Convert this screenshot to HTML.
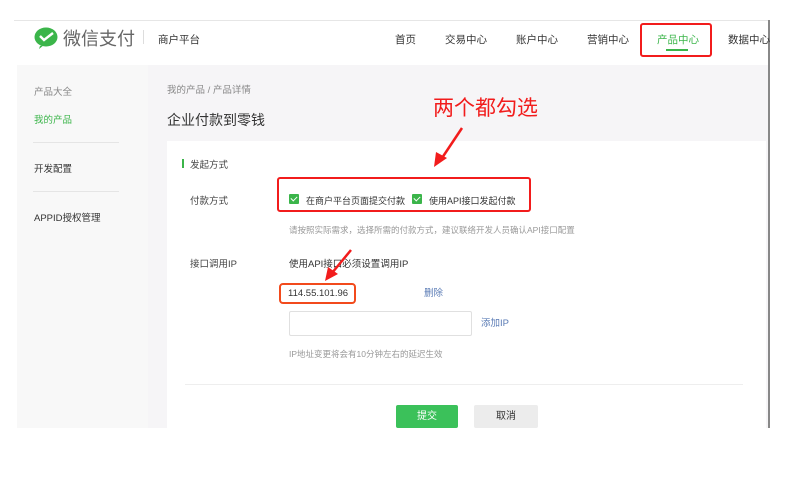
<!DOCTYPE html><html><head><meta charset="utf-8"><style>
*{margin:0;padding:0;box-sizing:border-box}
body{width:793px;height:486px;background:#fff;position:relative;overflow:hidden;font-family:"Liberation Sans","Noto Sans CJK SC",sans-serif;color:#353535}
.a{position:absolute;white-space:nowrap;line-height:1}
.t{margin-top:3px}
.cb{position:absolute;width:10px;height:10px;background:#3bb54a;border-radius:1px}
.cb:after{content:"";position:absolute;left:2px;top:2px;width:5px;height:3px;border-left:1.3px solid #fff;border-bottom:1.3px solid #fff;transform:rotate(-45deg)}
</style></head><body>
<div class="a" style="left:14px;top:20px;width:756px;height:1px;background:#e6e6e6"></div>
<div class="a" style="left:768px;top:20px;width:2px;height:408px;background:#888"></div>
<svg class="a" style="left:34px;top:27px" width="24" height="22" viewBox="0 0 24 22"><ellipse cx="12" cy="10" rx="11.5" ry="9.5" fill="#3bb54a"/><path d="M6 19 L5 22 L10 18Z" fill="#3bb54a"/><path d="M6 9 L10 13 L19 6" stroke="#fff" stroke-width="2.4" fill="none"/></svg>
<div class="a t" style="left:63px;top:27px;font-size:18px;color:#666">微信支付</div>
<div class="a" style="left:143px;top:30px;width:1px;height:14px;background:#ddd"></div>
<div class="a t" style="left:158px;top:32px;font-size:10.5px;color:#333">商户平台</div>
<div class="a t" style="left:395px;top:32px;font-size:10.5px;color:#333">首页</div>
<div class="a t" style="left:445px;top:32px;font-size:10.5px;color:#333">交易中心</div>
<div class="a t" style="left:516px;top:32px;font-size:10.5px;color:#333">账户中心</div>
<div class="a t" style="left:587px;top:32px;font-size:10.5px;color:#333">营销中心</div>
<div class="a t" style="left:657px;top:32px;font-size:10.5px;color:#3bb54a">产品中心</div>
<div class="a" style="left:666px;top:49px;width:22px;height:2px;background:#3bb54a"></div>
<div class="a" style="left:640px;top:23px;width:72px;height:34px;border:2px solid #f21c1c;border-radius:3px"></div>
<div class="a t" style="left:728px;top:32px;font-size:10.5px;color:#333">数据中心</div>
<div class="a" style="left:17px;top:65px;width:751px;height:363px;background:#f6f5f7"></div>
<div class="a" style="left:17px;top:65px;width:131px;height:363px;background:#f8f8f8"></div>
<div class="a t" style="left:34px;top:85px;font-size:9.5px;color:#888">产品大全</div>
<div class="a t" style="left:34px;top:113px;font-size:9.5px;color:#3bb54a">我的产品</div>
<div class="a" style="left:33px;top:142px;width:86px;height:1px;background:#e5e5e5"></div>
<div class="a t" style="left:34px;top:162px;font-size:9.5px;color:#333">开发配置</div>
<div class="a" style="left:33px;top:191px;width:86px;height:1px;background:#e5e5e5"></div>
<div class="a t" style="left:34px;top:211px;font-size:9.5px;color:#333">APPID授权管理</div>
<div class="a t" style="left:167px;top:83px;font-size:9.5px;color:#888">我的产品 / 产品详情</div>
<div class="a t" style="left:167px;top:110px;font-size:14px;color:#333">企业付款到零钱</div>
<div class="a t" style="left:433px;top:95px;font-size:21px;color:#f21c1c">两个都勾选</div>
<div class="a" style="left:167px;top:141px;width:599px;height:287px;background:#fff"></div>
<div class="a" style="left:182px;top:159px;width:2px;height:9px;background:#3bb54a"></div>
<div class="a t" style="left:190px;top:158px;font-size:9.5px;color:#444">发起方式</div>
<div class="a t" style="left:190px;top:194px;font-size:9.5px;color:#444">付款方式</div>
<div class="a" style="left:277px;top:177px;width:254px;height:35px;border:2px solid #f21c1c;border-radius:3px"></div>
<div class="cb" style="left:289px;top:194px"></div>
<div class="a t" style="left:306px;top:194px;font-size:9px;color:#333">在商户平台页面提交付款</div>
<div class="cb" style="left:412px;top:194px"></div>
<div class="a t" style="left:429px;top:194px;font-size:9px;color:#333">使用API接口发起付款</div>
<div class="a t" style="left:289px;top:223px;font-size:8.5px;color:#999">请按照实际需求，选择所需的付款方式，建议联络开发人员确认API接口配置</div>
<div class="a t" style="left:190px;top:257px;font-size:9.5px;color:#444">接口调用IP</div>
<div class="a t" style="left:289px;top:257px;font-size:9.5px;color:#333">使用API接口必须设置调用IP</div>
<div class="a" style="left:279px;top:283px;width:77px;height:21px;border:2px solid #f24a1c;border-radius:4px"></div>
<div class="a t" style="left:288px;top:286px;font-size:9.5px;color:#333">114.55.101.96</div>
<div class="a t" style="left:424px;top:286px;font-size:9.5px;color:#5a7bb5">删除</div>
<div class="a" style="left:289px;top:311px;width:183px;height:25px;border:1px solid #e0e0e0;border-radius:2px"></div>
<div class="a t" style="left:481px;top:316px;font-size:9.5px;color:#5a7bb5">添加IP</div>
<div class="a t" style="left:289px;top:347px;font-size:8.5px;color:#999">IP地址变更将会有10分钟左右的延迟生效</div>
<div class="a" style="left:185px;top:384px;width:558px;height:1px;background:#eee"></div>
<div class="a" style="left:396px;top:405px;width:62px;height:23px;background:#3bc15a;border-radius:2px;color:#fff;font-size:10px;text-align:center;line-height:23px">提交</div>
<div class="a" style="left:474px;top:405px;width:64px;height:23px;background:#ececec;border-radius:2px;color:#333;font-size:10px;text-align:center;line-height:23px">取消</div>
<svg class="a" style="left:0;top:0" width="793" height="486"><path d="M462 128 L442 158" stroke="#f21c1c" stroke-width="2.5"/><path d="M434 167 L436 152 L447 158Z" fill="#f21c1c"/><path d="M351 250 L332 273" stroke="#f21c1c" stroke-width="2.5"/><path d="M325 281 L328 267 L338 274Z" fill="#f21c1c"/></svg>
</body></html>
